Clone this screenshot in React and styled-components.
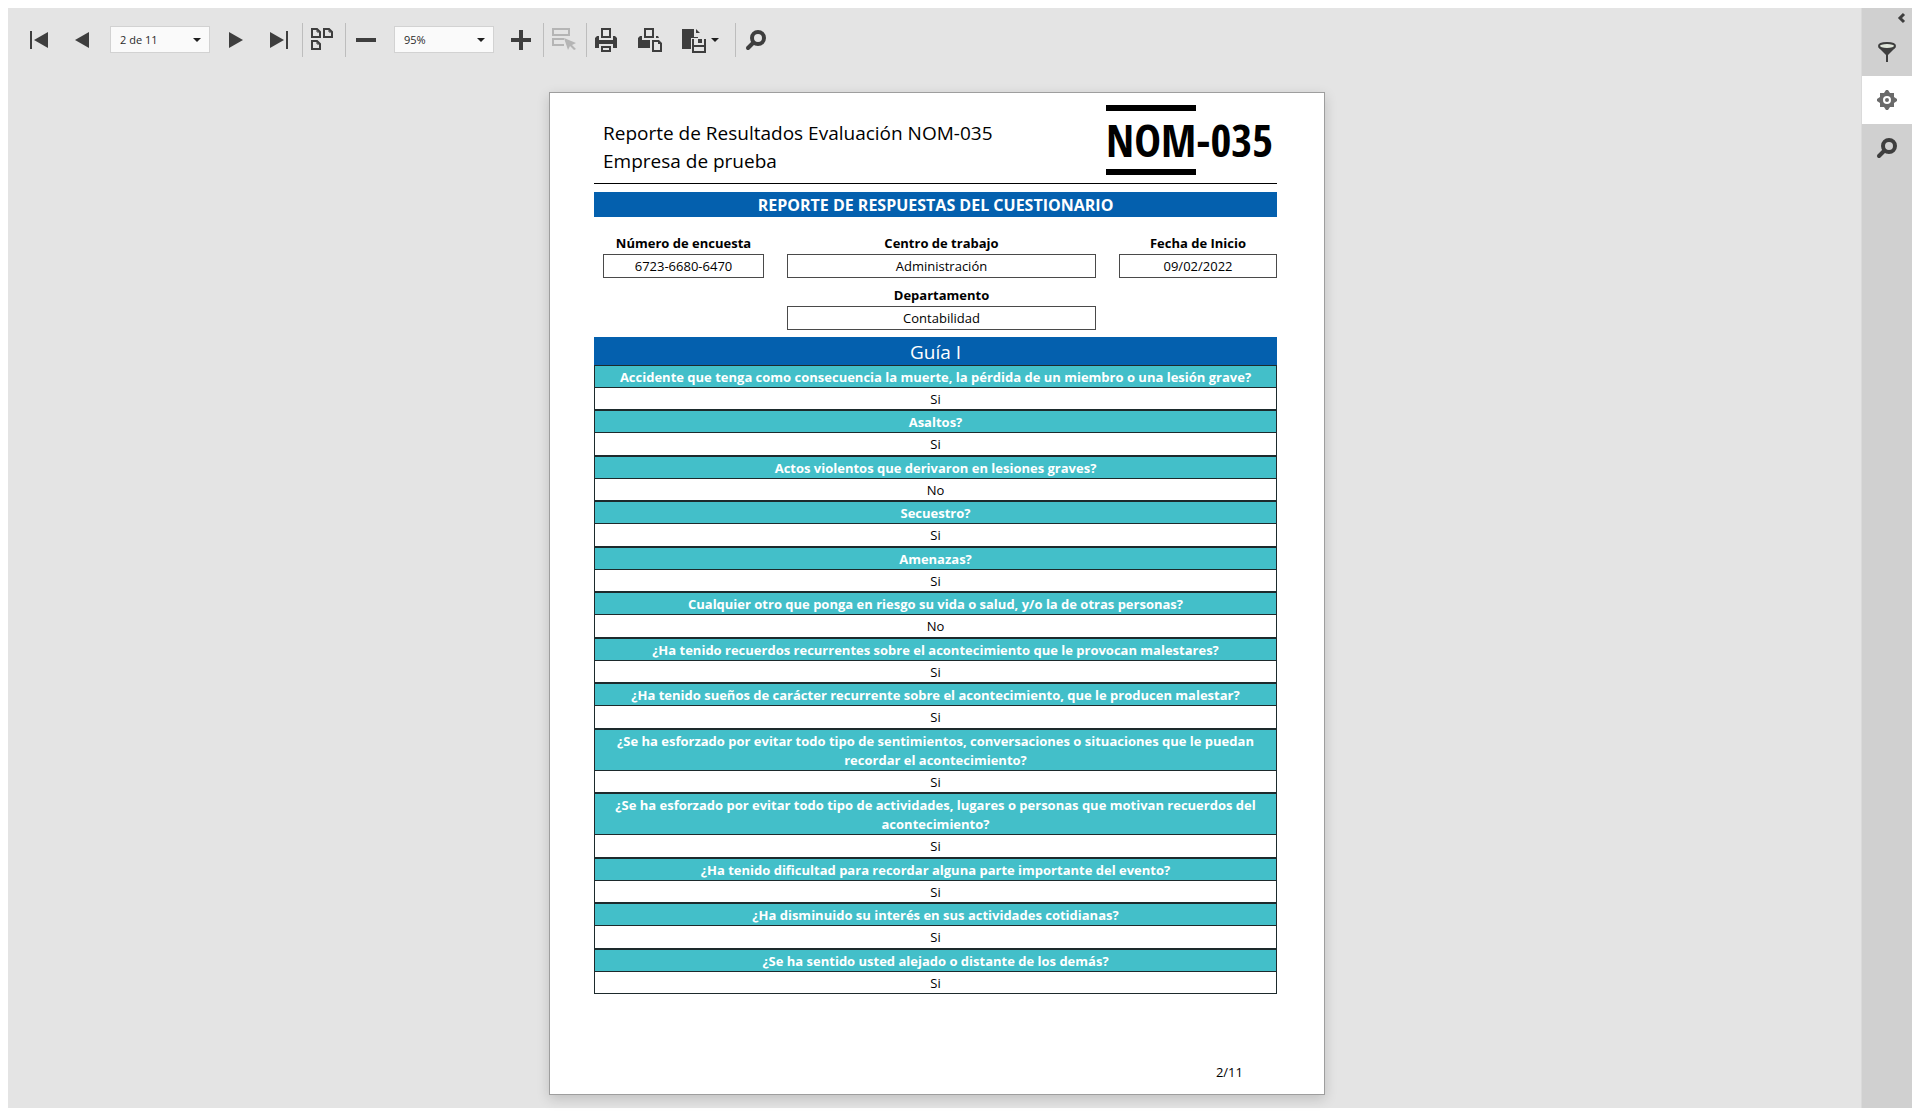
import React from "react";
import styled, { createGlobalStyle, css } from "styled-components";

const GlobalStyle = createGlobalStyle`
  *, *::before, *::after { box-sizing: border-box; }
  body {
    margin: 0;
    background: #fff;
    color: #000;
    font-family: "Segoe UI", "Open Sans", "Noto Sans", sans-serif;
    font-size: 13px;
  }
  button, select { font-family: inherit; color: inherit; }
`;

const Viewer = styled.div`
  display: flex;
  min-height: 100vh;
  border: 8px solid #fff;
  background: #e4e4e4;
`;

const Main = styled.main`
  flex: 1;
  min-width: 0;
`;

const Toolbar = styled.div`
  display: flex;
  align-items: center;
  padding: 15px 10px 0;
  color: #3e3e3e;
`;

const ToolButton = styled.button`
  display: flex;
  align-items: center;
  gap: 6px;
  width: ${(p) => (p.$wide ? "63px" : "43px")};
  height: 34px;
  padding: 0;
  padding-left: ${(p) => (p.$separated ? "8px" : "9px")};
  border: 0;
  border-left: ${(p) => (p.$separated ? "1px solid #bdbdbd" : "0")};
  background: none;
  &:disabled { color: #b5b5b5; }
`;

const Icon = styled.svg`
  flex: none;
  width: 24px;
  height: 24px;
  fill: currentColor;
`;

const Caret = styled.svg`
  flex: none;
  width: 8px;
  height: 4px;
  fill: #1f1f1f;
`;

const SelectWrap = styled.span`
  display: grid;
  align-items: center;
  width: 100px;
  height: 27px;
  margin: 0 6px 1px;
  border: 1px solid #d2d2d2;
  background: #fafafa;
  & > * { grid-area: 1 / 1; }
  & > svg { justify-self: end; margin-right: 8px; pointer-events: none; }
`;

const Select = styled.select`
  appearance: none;
  width: 100%;
  height: 100%;
  padding: 0 20px 0 9px;
  border: 0;
  background: transparent;
  color: #2b2b2b;
  font-size: 11px;
`;

const SideBar = styled.aside`
  display: flex;
  flex-direction: column;
  flex: none;
  width: 51px;
  border-left: 1px solid #dadada;
  background: #d0d0d0;
  color: #3e3e3e;
`;

const Collapse = styled.button`
  display: flex;
  justify-content: flex-end;
  align-items: center;
  height: 20px;
  padding: 0 7px 0 0;
  border: 0;
  background: none;
`;

const SideTab = styled.button`
  display: flex;
  justify-content: center;
  align-items: center;
  height: 48px;
  padding: 0;
  border: 0;
  background: ${(p) => (p.$active ? "#fff" : "none")};
  color: ${(p) => (p.$active ? "#6a6a6a" : "inherit")};
`;

const Canvas = styled.div`
  display: flex;
  justify-content: center;
  padding: 35px 0 13px 5px;
`;

const Sheet = styled.article`
  width: 776px;
  padding: 0 47px 12px 44px;
  border: 1px solid #9e9e9e;
  background: #fff;
  box-shadow: 0 4px 12px rgba(0, 0, 0, 0.16);
`;

const SheetHeader = styled.header`
  display: flex;
  justify-content: space-between;
  align-items: flex-start;
  height: 91px;
  padding: 12px 4px 0 9px;
  border-bottom: 1px solid #000;
`;

const Title = styled.h1`
  margin: 14px 0 0;
  font-size: 19px;
  line-height: 28px;
  font-weight: 400;
`;

const Logo = styled.div`
  display: flex;
  align-items: center;
  font-family: "Open Sans Condensed", "Noto Sans ExtraCondensed", "Roboto Condensed", "Arial Narrow", sans-serif;
  font-size: 45px;
  line-height: 58px;
  font-weight: 700;
`;

const LogoMark = styled.span`
  border: solid #000;
  border-width: 6px 0;
`;

const Banner = styled.h2`
  margin: 8px 0 0;
  padding-top: 1px;
  background: #0460ae;
  color: #fff;
  font-size: 16px;
  line-height: 24px;
  font-weight: 700;
  text-align: center;
`;

const Fields = styled.dl`
  display: grid;
  grid-template-columns: 161px 1fr 158px;
  gap: 8px 23px;
  margin: 17px 0 7px;
  padding-left: 9px;
  text-align: center;
`;

const Field = styled.div`
  grid-column: ${(p) => p.$column};
`;

const FieldLabel = styled.dt`
  padding-bottom: 2px;
  font-size: 13px;
  line-height: 18px;
  font-weight: 700;
`;

const FieldValue = styled.dd`
  margin: 0;
  border: 1px solid #4a4a4a;
  font-size: 13px;
  line-height: 22px;
`;

const Guide = styled.table`
  width: 100%;
  border-spacing: 0;
  text-align: center;
`;

const GuideTitle = styled.caption`
  padding-top: 2px;
  background: #0460ae;
  color: #fff;
  font-size: 19px;
  line-height: 26px;
`;

const cell = css`
  padding: 0 8px;
  border: 1px solid #1d2a2c;
  font-size: 13px;
`;

const Question = styled.th`
  ${cell}
  height: 23px;
  padding-top: 2px;
  background: #43bfc9;
  color: #fff;
  line-height: 19px;
  font-weight: 700;
`;

const Answer = styled.td`
  ${cell}
  height: 22px;
  border-top: 0;
  line-height: 20px;
`;

const Group = styled.tbody`
  &:nth-of-type(even) ${Answer} { height: 23px; }
`;

const PageNumber = styled.footer`
  margin-top: 68px;
  padding-right: 34px;
  font-size: 13px;
  line-height: 20px;
  text-align: right;
`;

const SearchShape = () => (
  <g fill="none" stroke="currentColor">
    <circle cx="14" cy="10" r="6" strokeWidth="4" />
    <path d="M9.5 14.500L4 20" strokeWidth="4" strokeLinecap="round" />
  </g>
);

const icons = {
  first: <path d="M3 3h2v18H3zM21 4v16L7 12z" />,
  prev: <path d="M19 4v16L5 12z" />,
  next: <path d="M4 4v16l14-8z" />,
  last: <path d="M2 4v16l14-8zM18 3h2v18h-2z" />,
  multi: (
    <g fill="none" stroke="currentColor" strokeWidth="2">
      <path d="M1 1h5l3 3v5H1zM13 1h5l3 3v5h-8zM1 13h5l3 3v5H1z" />
      <path d="M6 1v3h3M18 1v3h3M6 13v3h3" strokeWidth="1" />
    </g>
  ),
  minus: <path d="M2 10h20v4H2z" />,
  plus: <path d="M10 2h4v8h8v4h-8v8h-4v-8H2v-4h8z" />,
  fields: (
    <>
      <path d="M0 0h18v8H0zM2 2v4h14V2z" fillRule="evenodd" />
      <path d="M0 10h12v2H2v4h10v2H0zM12 10l12 5-4 2 4 4-2 1-4-4-2 4z" />
    </>
  ),
  print: (
    <>
      <path d="M6 0h10v10H6zM8 2v6h6V2zM6 18h10v6H6zM8 20v2h6v-2z" fillRule="evenodd" />
      <path d="M2 8h2v4h14V8h2l2 2v10h-4v-4H4v4H0V10z" />
    </>
  ),
  printPage: (
    <>
      <path d="M6 0h10v10H6zM8 2v6h6V2zM14 12h7l3 3v9H14zM16 14v8h6v-6h-2v-2z" fillRule="evenodd" />
      <path d="M2 8h2v4h8v8H0V10zM18 8h2l1 2h-3z" />
    </>
  ),
  exportTo: (
    <>
      <path d="M1 1h12v8h4v1h-7v11H1zM15 1l4 4h-4z" />
      <path d="M11 11h2v6h10v-6h2v14H11zM13 19v4h10v-4zM17 11h4v4h-4z" fillRule="evenodd" />
    </>
  ),
  search: <SearchShape />,
  filter: (
    <>
      <ellipse cx="12" cy="6" rx="8" ry="3" fill="#e0e6da" stroke="currentColor" strokeWidth="2" />
      <path d="M3 7c3 3 15 3 18 0l-8 8v7h-2v-7z" />
    </>
  ),
  gear: (
    <path
      fillRule="evenodd"
      d="M11 2h2l2 3h4v4l3 2v2l-3 2v4h-4l-2 3h-2l-2-3H5v-4l-3-2v-2l3-2V5h4zM12 8a4 4 0 1 0 0 8a4 4 0 1 0 0-8zM12 10a2 2 0 1 1 0 4a2 2 0 1 1 0-4z"
    />
  ),
};

const Glyph = ({ name }) => (
  <Icon viewBox="0 0 24 24" overflow="visible" aria-hidden="true">{icons[name]}</Icon>
);

const Arrow = () => (
  <Caret viewBox="0 0 8 4" aria-hidden="true"><path d="M0 0h8L4 4z" /></Caret>
);

const Tool = ({ icon, label, menu, ...rest }) => (
  <ToolButton type="button" aria-label={label} $wide={menu} {...rest}>
    <Glyph name={icon} />
    {menu && <Arrow />}
  </ToolButton>
);

const Picker = ({ label, options, value }) => (
  <SelectWrap>
    <Select aria-label={label} defaultValue={value}>
      {options.map((o) => <option key={o}>{o}</option>)}
    </Select>
    <Arrow />
  </SelectWrap>
);

const pages = Array.from({ length: 11 }, (_, i) => `${i + 1} de 11`);
const zooms = ["50%", "75%", "95%", "100%", "150%"];

const fields = [
  { label: "Número de encuesta", value: "6723-6680-6470", column: 1 },
  { label: "Centro de trabajo", value: "Administración", column: 2 },
  { label: "Fecha de Inicio", value: "09/02/2022", column: 3 },
  { label: "Departamento", value: "Contabilidad", column: 2 },
];

const answers = [
  ["Accidente que tenga como consecuencia la muerte, la pérdida de un miembro o una lesión grave?", "Si"],
  ["Asaltos?", "Si"],
  ["Actos violentos que derivaron en lesiones graves?", "No"],
  ["Secuestro?", "Si"],
  ["Amenazas?", "Si"],
  ["Cualquier otro que ponga en riesgo su vida o salud, y/o la de otras personas?", "No"],
  ["¿Ha tenido recuerdos recurrentes sobre el acontecimiento que le provocan malestares?", "Si"],
  ["¿Ha tenido sueños de carácter recurrente sobre el acontecimiento, que le producen malestar?", "Si"],
  ["¿Se ha esforzado por evitar todo tipo de sentimientos, conversaciones o situaciones que le puedan recordar el acontecimiento?", "Si"],
  ["¿Se ha esforzado por evitar todo tipo de actividades, lugares o personas que motivan recuerdos del acontecimiento?", "Si"],
  ["¿Ha tenido dificultad para recordar alguna parte importante del evento?", "Si"],
  ["¿Ha disminuido su interés en sus actividades cotidianas?", "Si"],
  ["¿Se ha sentido usted alejado o distante de los demás?", "Si"],
];

export default function App() {
  return (
    <>
      <GlobalStyle />
      <Viewer>
        <Main>
          <Toolbar role="toolbar">
            <Tool icon="first" label="Primera página" />
            <Tool icon="prev" label="Página anterior" />
            <Picker label="Página" options={pages} value="2 de 11" />
            <Tool icon="next" label="Página siguiente" />
            <Tool icon="last" label="Última página" />
            <Tool icon="multi" label="Varias páginas" $separated />
            <Tool icon="minus" label="Alejar" $separated />
            <Picker label="Zoom" options={zooms} value="95%" />
            <Tool icon="plus" label="Acercar" />
            <Tool icon="fields" label="Resaltar campos" $separated disabled />
            <Tool icon="print" label="Imprimir" $separated />
            <Tool icon="printPage" label="Imprimir página" />
            <Tool icon="exportTo" label="Exportar" menu />
            <Tool icon="search" label="Buscar" $separated />
          </Toolbar>
          <Canvas>
            <Sheet>
              <SheetHeader>
                <Title>
                  Reporte de Resultados Evaluación NOM-035
                  <br />
                  Empresa de prueba
                </Title>
                <Logo>
                  <LogoMark>NOM</LogoMark>-035
                </Logo>
              </SheetHeader>
              <Banner>REPORTE DE RESPUESTAS DEL CUESTIONARIO</Banner>
              <Fields>
                {fields.map((f) => (
                  <Field key={f.label} $column={f.column}>
                    <FieldLabel>{f.label}</FieldLabel>
                    <FieldValue>{f.value}</FieldValue>
                  </Field>
                ))}
              </Fields>
              <Guide>
                <GuideTitle>Guía I</GuideTitle>
                {answers.map(([question, answer]) => (
                  <Group key={question}>
                    <tr><Question scope="row">{question}</Question></tr>
                    <tr><Answer>{answer}</Answer></tr>
                  </Group>
                ))}
              </Guide>
              <PageNumber>2/11</PageNumber>
            </Sheet>
          </Canvas>
        </Main>
        <SideBar>
          <Collapse type="button" aria-label="Contraer panel">
            <svg width="6" height="10" viewBox="0 0 6 10" fill="none" stroke="currentColor" strokeWidth="3" overflow="visible" aria-hidden="true">
              <path d="M5 1L1 5l4 4" />
            </svg>
          </Collapse>
          <SideTab type="button" aria-label="Parámetros"><Glyph name="filter" /></SideTab>
          <SideTab type="button" aria-label="Opciones de exportación" $active><Glyph name="gear" /></SideTab>
          <SideTab type="button" aria-label="Buscar en el documento"><Glyph name="search" /></SideTab>
        </SideBar>
      </Viewer>
    </>
  );
}
